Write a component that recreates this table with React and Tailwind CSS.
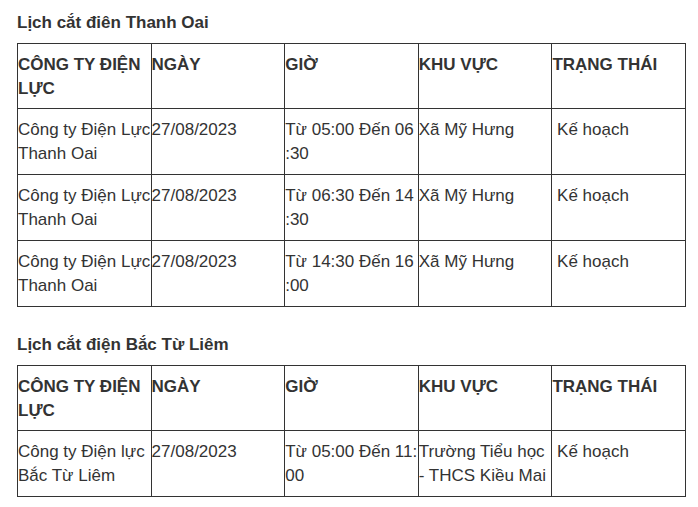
const sections = [
  {
    title: 'Lịch cắt điên Thanh Oai',
    rows: [
      [['Công ty Điện Lực', 'Thanh Oai'], ['27/08/2023'], ['Từ 05:00 Đến 06', ':30'], ['Xã Mỹ Hưng'], ['\u00a0Kế hoạch']],
      [['Công ty Điện Lực', 'Thanh Oai'], ['27/08/2023'], ['Từ 06:30 Đến 14', ':30'], ['Xã Mỹ Hưng'], ['\u00a0Kế hoạch']],
      [['Công ty Điện Lực', 'Thanh Oai'], ['27/08/2023'], ['Từ 14:30 Đến 16', ':00'], ['Xã Mỹ Hưng'], ['\u00a0Kế hoạch']],
    ],
  },
  {
    title: 'Lịch cắt điện Bắc Từ Liêm',
    rows: [
      [['Công ty Điện lực', 'Bắc Từ Liêm'], ['27/08/2023'], ['Từ 05:00 Đến 11:', '00'], ['Trường Tiểu học', '- THCS Kiều Mai'], ['\u00a0Kế hoạch']],
    ],
  },
];

const headers = [['CÔNG TY ĐIỆN', 'LỰC'], ['NGÀY'], ['GIỜ'], ['KHU VỰC'], ['TRẠNG THÁI']];

function Lines({ lines }) {
  return lines.map((l, i) => (
    <div key={i} className="whitespace-nowrap overflow-hidden">
      {l}
    </div>
  ));
}

function Schedule({ title, rows }) {
  return (
    <div className="mb-[25px]">
      <h3 className="text-[17px] leading-[24px] font-bold pl-[17px] pt-[1px] mb-[8px]">{title}</h3>
      <table className="table-fixed border-collapse w-[669px] ml-[17px]">
        <thead>
          <tr>
            {headers.map((h, i) => (
              <th key={i} className="border border-[#333] text-left align-top font-bold pt-[9px] pb-[7px] px-0 h-[65px]">
                <Lines lines={h} />
              </th>
            ))}
          </tr>
        </thead>
        <tbody>
          {rows.map((r, ri) => (
            <tr key={ri}>
              {r.map((c, ci) => (
                <td key={ci} className="border border-[#333] align-top pt-[9px] pb-[8px] px-0 h-[66px]">
                  <Lines lines={c} />
                </td>
              ))}
            </tr>
          ))}
        </tbody>
      </table>
    </div>
  );
}

export default function App() {
  return (
    <div className="bg-white min-h-[507px] pt-[10px] text-[#333] text-[17px] leading-[24px]" style={{ fontFamily: '"Liberation Sans", Arial, sans-serif' }}>
      {sections.map((s) => (
        <Schedule key={s.title} title={s.title} rows={s.rows} />
      ))}
    </div>
  );
}
